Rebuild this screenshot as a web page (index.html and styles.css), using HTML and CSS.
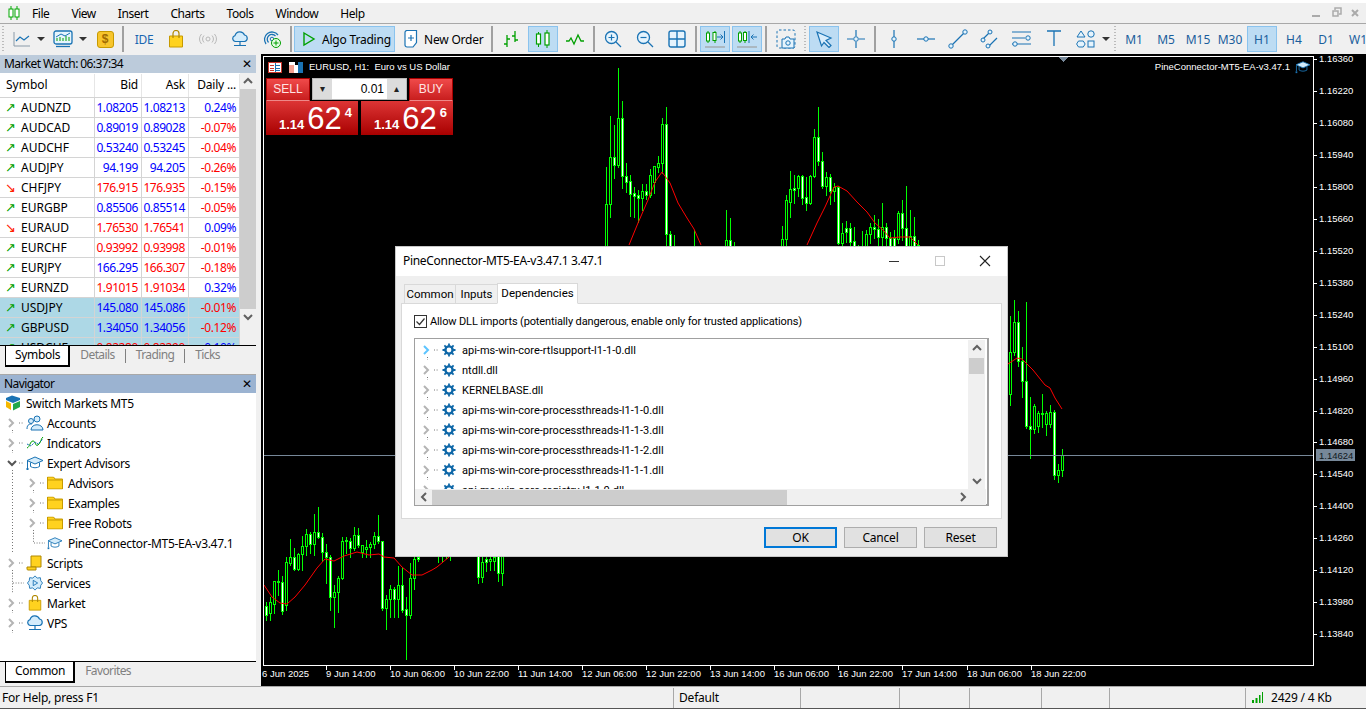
FILE: index.html
```html
<!DOCTYPE html>
<html lang="en">
<head>
<meta charset="utf-8">
<title>MetaTrader 5</title>
<link rel="stylesheet" href="styles.css">
</head>
<body>
<svg class="defs" aria-hidden="true">
  <symbol id="tw-r" viewBox="0 0 26 20"><path d="M9 6l4 4-4 4" fill="none" stroke="#b4b4b4" stroke-width="2"/><path d="M12.5 17v3M19 10h5" stroke="#777" stroke-dasharray="1 1.6" fill="none"/></symbol>
  <symbol id="tw-b" viewBox="0 0 26 20"><path d="M9 6l4 4-4 4" fill="none" stroke="#5cc4ff" stroke-width="2"/><path d="M12.5 17v3M19 10h5" stroke="#777" stroke-dasharray="1 1.6" fill="none"/></symbol>
  <symbol id="tw-d" viewBox="0 0 26 20"><path d="M8 8l4 4 4-4" fill="none" stroke="#555" stroke-width="2"/><path d="M12.5 17v3M19 10h5" stroke="#777" stroke-dasharray="1 1.6" fill="none"/></symbol>
  <symbol id="tw-t" viewBox="0 0 26 20"><path d="M12.5 0v20M13 10h11" stroke="#777" stroke-dasharray="1 1.6" fill="none"/></symbol>
  <symbol id="tw-l" viewBox="0 0 26 20"><path d="M12.5 0v10M13 10h11" stroke="#777" stroke-dasharray="1 1.6" fill="none"/></symbol>
  <symbol id="gear" viewBox="0 0 14 14"><circle cx="7" cy="7" r="3.6" fill="none" stroke="#0f68a8" stroke-width="2.4"/><path d="M7 .5v2.6M7 10.900v2.600M.5 7h2.600M10.900 7h2.600M2.400 2.400l1.900 1.900M9.700 9.700l1.900 1.900M2.400 11.600l1.900-1.900M9.700 4.300l1.900-1.900" stroke="#0f68a8" stroke-width="1.800"/></symbol>
  <symbol id="folder" viewBox="0 0 16 13"><path d="M.5 12.500V.5h6l1.500 2h7.500v10z" fill="#ffd21f" stroke="#c79a00"/><path d="M.5 3.500h15" stroke="#c79a00"/></symbol>
  <symbol id="cap" viewBox="0 0 18 16"><path d="M1 5.500L9 2l8 3.500L9 9z" fill="#d4ecfb" stroke="#1a73b4"/><path d="M4.500 7.500v4c2.500 1.700 6.500 1.700 9 0v-4" fill="none" stroke="#1a73b4"/><path d="M1.500 6v7" stroke="#1a73b4"/><rect x="0.500" y="13" width="2" height="2" fill="#1a73b4"/></symbol>
  <symbol id="bag" viewBox="0 0 16 18"><path d="M1.500 6h13v11h-13z" fill="#ffd21f" stroke="#c79a00"/><path d="M5 8V3.500a3 3 0 0 1 6 0V8" fill="none" stroke="#b08800" stroke-width="1.200"/></symbol>
  <symbol id="cloud" viewBox="0 0 18 16"><path d="M4.500 10.500a3 3 0 0 1-.5-5.900 5 5 0 0 1 9.500-.6 3.300 3.300 0 0 1 0 6.500z" fill="#d4ecfb" stroke="#1a73b4" stroke-width="1.200"/><path d="M9 10.500v3.500M3 14.500h12" stroke="#1a73b4" stroke-width="1.200"/></symbol>
</svg>

<div class="app">
  <header class="menubar">
    <svg class="logo" viewBox="0 0 12 14"><path d="M3 0v14M9 0v14" stroke="#00a800"/><rect x="1" y="3" width="4" height="8" fill="#fff" stroke="#00a800"/><rect x="7" y="3" width="4" height="8" fill="#fff" stroke="#00a800"/></svg>
    <nav class="menu"><span>File</span><span>View</span><span>Insert</span><span>Charts</span><span>Tools</span><span>Window</span><span>Help</span></nav>
    <div class="winctl">
      <svg viewBox="0 0 50 12" class="winctl-ic"><path d="M1 9h8" stroke="#aaa" stroke-width="2"/><path d="M22 4h5v5h-5zM24 3V1h6v6h-2" fill="none" stroke="#aaa" stroke-width="1.500"/><path d="M41 3l6 6M47 3l-6 6" stroke="#aaa" stroke-width="2"/></svg>
    </div>
  </header>

  <div class="toolbar">
    <i class="grip"></i>
    <div class="tb dd dd-a"><svg viewBox="0 0 18 16" class="ic18"><path d="M1 1v14h16" fill="none" stroke="#8a9aa8"/><path d="M3 10l4-4 4 3 5-4" fill="none" stroke="#1a73b4" stroke-width="1.200"/></svg><b class="arrow"></b></div>
    <div class="tb dd dd-b"><svg viewBox="0 0 20 18" class="ic20"><rect x="1" y="1" width="18" height="13" rx="2" fill="#e6f4fd" stroke="#1a73b4" stroke-width="1.300"/><path d="M4 11V8M7 11V7M10 11V8M13 11V6M16 11V7" stroke="#00a000"/><path d="M3 7l5-3 4 2 5-3" fill="none" stroke="#1a73b4"/><path d="M3 16.500h14" stroke="#1a73b4" stroke-width="1.300"/></svg><b class="arrow"></b></div>
    <div class="tb"><span class="dollar">$</span></div>
    <i class="sep sep-wide"></i>
    <div class="tb"><span class="ide">IDE</span></div>
    <div class="tb"><svg viewBox="0 0 16 18" class="ic18"><use href="#bag"/></svg></div>
    <div class="tb"><svg viewBox="0 0 18 12" class="ic18"><circle cx="9" cy="6" r="2" fill="none" stroke="#b8b8b8"/><path d="M5 2.500a5 5 0 0 0 0 7M13 2.500a5 5 0 0 1 0 7M2.500 1a8 8 0 0 0 0 10M15.500 1a8 8 0 0 1 0 10" fill="none" stroke="#b8b8b8"/></svg></div>
    <div class="tb"><svg viewBox="0 0 18 16" class="ic18"><use href="#cloud"/></svg></div>
    <div class="tb"><svg viewBox="0 0 18 18" class="ic18"><path d="M3 14A7.500 7.500 0 1 1 15 5M5.500 12.500A4.500 4.500 0 1 1 12.500 6" fill="none" stroke="#1a73b4" stroke-width="1.300"/><circle cx="9" cy="9" r="1.800" fill="none" stroke="#1a73b4"/><circle cx="13" cy="13" r="4.500" fill="#e8fbe8" stroke="#00a000"/><path d="M13 10.500v5M10.500 13h5" stroke="#00a000"/></svg></div>
    <i class="sep"></i>
    <div class="tbtext algo active"><svg viewBox="0 0 14 16" class="ic-play"><path d="M2 2l10 6-10 6z" fill="none" stroke="#00a000" stroke-width="1.400"/></svg><span>Algo Trading</span></div>
    <div class="tbtext order"><svg viewBox="0 0 15 18" class="ic-doc"><path d="M1 2.500a2 2 0 0 1 2-2h9.500v12L9 17H3a2 2 0 0 1-2-2z" fill="#fff" stroke="#1a73b4" stroke-width="1.200"/><path d="M7 5v6M4 8h6" stroke="#1a73b4" stroke-width="1.200"/></svg><span>New Order</span></div>
    <i class="sep"></i>
    <div class="tb"><svg viewBox="0 0 18 18" class="ic18"><path d="M5 5v12M2 14h3M5 9h3M13 1v11M13 6h-3M13 10h3" fill="none" stroke="#00a000" stroke-width="1.300"/></svg></div>
    <div class="tb active"><svg viewBox="0 0 16 18" class="ic18"><path d="M3.500 2v15M12 0v18" stroke="#00a000"/><rect x="1.500" y="4" width="4" height="10" fill="#fff" stroke="#00a000" stroke-width="1.200"/><rect x="10" y="3" width="4" height="12" fill="#fff" stroke="#00a000" stroke-width="1.200"/></svg></div>
    <div class="tb"><svg viewBox="0 0 18 12" class="ic18"><path d="M0 8h3l2-3 3 6 4-9 3 6h3" fill="none" stroke="#00a000" stroke-width="1.300"/></svg></div>
    <i class="sep"></i>
    <div class="tb"><svg viewBox="0 0 18 18" class="ic18"><circle cx="7.500" cy="7.500" r="6" fill="#e6f4fd" stroke="#1a73b4" stroke-width="1.300"/><path d="M12 12l5 5" stroke="#1a73b4" stroke-width="1.300"/><path d="M7.500 4.500v6M4.500 7.500h6" stroke="#1a73b4" stroke-width="1.200"/></svg></div>
    <div class="tb"><svg viewBox="0 0 18 18" class="ic18"><circle cx="7.500" cy="7.500" r="6" fill="#e6f4fd" stroke="#1a73b4" stroke-width="1.300"/><path d="M12 12l5 5" stroke="#1a73b4" stroke-width="1.300"/><path d="M4.500 7.500h6" stroke="#1a73b4" stroke-width="1.200"/></svg></div>
    <div class="tb"><svg viewBox="0 0 18 18" class="ic18"><rect x="1" y="1" width="16" height="16" rx="2" fill="#e6f4fd" stroke="#1a73b4" stroke-width="1.400"/><path d="M9 1v16M1 9h16" stroke="#1a73b4" stroke-width="1.400"/></svg></div>
    <i class="sep"></i>
    <div class="tb active"><svg viewBox="0 0 20 18" class="ic20"><path d="M3 1v12M10 1v12" stroke="#00a000"/><rect x="1.500" y="3" width="3" height="8" fill="#fff" stroke="#00a000"/><rect x="8" y="2.500" width="3" height="8" fill="#fff" stroke="#00a000"/><path d="M12 7h6M15.500 4.500L18 7l-2.500 2.500" fill="none" stroke="#1a73b4"/><path d="M19.500 1v12" stroke="#1a73b4"/><path d="M0 17h20" stroke="#a0a0a0" stroke-width="1.200"/></svg></div>
    <div class="tb active"><svg viewBox="0 0 20 18" class="ic20"><path d="M3 1v12M8 1v12" stroke="#00a000"/><rect x="1.500" y="3" width="3" height="8" fill="#fff" stroke="#00a000"/><rect x="6.500" y="2.500" width="3" height="8" fill="#fff" stroke="#00a000"/><path d="M12 1v12" stroke="#1a73b4"/><path d="M14 7h6M16.500 4.500L14 7l2.500 2.500" fill="none" stroke="#1a73b4"/><path d="M0 17h20" stroke="#a0a0a0" stroke-width="1.200"/></svg></div>
    <i class="sep sep-r"></i>
    <div class="tb"><svg viewBox="0 0 20 20" class="ic20"><rect x="1" y="1" width="18" height="18" rx="2" fill="none" stroke="#1a73b4" stroke-dasharray="2.500 2"/><path d="M6 10h3l1-2h3l1 2h4v9H6z" fill="#e6f4fd" stroke="#1a73b4"/><circle cx="12" cy="14" r="2.200" fill="none" stroke="#1a73b4"/></svg></div>
    <i class="grip grip-m"></i>
    <div class="tb active"><svg viewBox="0 0 18 18" class="ic18"><path d="M2 2l14 6-5 2.500 5 5-2 2-5-5L6.500 16z" fill="#d9edfb" stroke="#1a73b4" stroke-width="1.200"/></svg></div>
    <div class="tb"><svg viewBox="0 0 18 18" class="ic18"><path d="M9 0v6M9 12v6M0 9h6M12 9h6" stroke="#1a73b4" stroke-width="1.200"/><circle cx="9" cy="9" r="2.300" fill="#e6f4fd" stroke="#1a73b4"/></svg></div>
    <i class="sep"></i>
    <div class="tb"><svg viewBox="0 0 18 18" class="ic18"><path d="M9 0v18" stroke="#1a73b4" stroke-width="1.200"/><circle cx="9" cy="9" r="2.200" fill="#e6f4fd" stroke="#1a73b4"/></svg></div>
    <div class="tb"><svg viewBox="0 0 18 18" class="ic18"><path d="M0 9h18" stroke="#1a73b4" stroke-width="1.200"/><circle cx="9" cy="9" r="2.200" fill="#e6f4fd" stroke="#1a73b4"/></svg></div>
    <div class="tb"><svg viewBox="0 0 20 20" class="ic20"><path d="M3 17L17 3" stroke="#1a73b4" stroke-width="1.200"/><circle cx="3" cy="17" r="2.200" fill="#e6f4fd" stroke="#1a73b4"/><circle cx="17" cy="3" r="2.200" fill="#e6f4fd" stroke="#1a73b4"/></svg></div>
    <div class="tb"><svg viewBox="0 0 20 20" class="ic20"><path d="M2 11l8-8M8 18l9-9" stroke="#1a73b4" stroke-width="1.200"/><circle cx="3" cy="11" r="2" fill="#e6f4fd" stroke="#1a73b4"/><circle cx="10" cy="3" r="2" fill="#e6f4fd" stroke="#1a73b4"/><circle cx="8" cy="17" r="2" fill="#e6f4fd" stroke="#1a73b4"/></svg></div>
    <div class="tb"><svg viewBox="0 0 20 18" class="ic20"><path d="M0 2h19M0 8h13M0 14h19" stroke="#1a73b4" stroke-width="1.200"/><circle cx="16" cy="8" r="2.200" fill="#e6f4fd" stroke="#1a73b4"/><circle cx="3" cy="14" r="2.200" fill="#e6f4fd" stroke="#1a73b4"/></svg></div>
    <div class="tb"><svg viewBox="0 0 16 18" class="ic18"><path d="M1 1h14M8 1v15" stroke="#1a73b4" stroke-width="1.300"/></svg></div>
    <div class="tb dd dd-c"><svg viewBox="0 0 20 18" class="ic20"><path d="M5 1l4 6H1z" fill="#e6f4fd" stroke="#1a73b4"/><circle cx="15" cy="4" r="3.200" fill="#e6f4fd" stroke="#1a73b4"/><path d="M2 11h5l2 3-2 3H2l-2-3z" fill="#e6f4fd" stroke="#1a73b4" transform="translate(.6 0) scale(.95 1)"/><rect x="12" y="11" width="6" height="6" fill="#e6f4fd" stroke="#1a73b4"/></svg><b class="arrow"></b></div>
    <i class="grip grip-m"></i>
    <div class="tb tf">M1</div><div class="tb tf">M5</div><div class="tb tf">M15</div><div class="tb tf">M30</div><div class="tb tf active">H1</div><div class="tb tf">H4</div><div class="tb tf">D1</div><div class="tb tf">W1</div>
  </div>

  <div class="main">
    <aside class="left">
      <div class="panelhead mw-head"><span class="ph-t">Market Watch: 06:37:34</span><span class="x">✕</span></div>
      <div class="mw">
        <div class="mw-table">
          <div class="mw-row mw-top"><span class="c-s">Symbol</span><span>Bid</span><span>Ask</span><span>Daily ...</span></div>
          <div class="mw-row"><span class="c-s"><i class="ar up">↗</i>AUDNZD</span><span class="b">1.08205</span><span class="b">1.08213</span><span class="b">0.24%</span></div>
          <div class="mw-row"><span class="c-s"><i class="ar up">↗</i>AUDCAD</span><span class="b">0.89019</span><span class="b">0.89028</span><span class="r">-0.07%</span></div>
          <div class="mw-row"><span class="c-s"><i class="ar up">↗</i>AUDCHF</span><span class="b">0.53240</span><span class="b">0.53245</span><span class="r">-0.04%</span></div>
          <div class="mw-row"><span class="c-s"><i class="ar up">↗</i>AUDJPY</span><span class="b">94.199</span><span class="b">94.205</span><span class="r">-0.26%</span></div>
          <div class="mw-row"><span class="c-s"><i class="ar dn">↘</i>CHFJPY</span><span class="r">176.915</span><span class="r">176.935</span><span class="r">-0.15%</span></div>
          <div class="mw-row"><span class="c-s"><i class="ar up">↗</i>EURGBP</span><span class="b">0.85506</span><span class="b">0.85514</span><span class="r">-0.05%</span></div>
          <div class="mw-row"><span class="c-s"><i class="ar dn">↘</i>EURAUD</span><span class="r">1.76530</span><span class="r">1.76541</span><span class="b">0.09%</span></div>
          <div class="mw-row"><span class="c-s"><i class="ar up">↗</i>EURCHF</span><span class="r">0.93992</span><span class="r">0.93998</span><span class="r">-0.01%</span></div>
          <div class="mw-row"><span class="c-s"><i class="ar up">↗</i>EURJPY</span><span class="b">166.295</span><span class="r">166.307</span><span class="r">-0.18%</span></div>
          <div class="mw-row"><span class="c-s"><i class="ar up">↗</i>EURNZD</span><span class="r">1.91015</span><span class="r">1.91034</span><span class="b">0.32%</span></div>
          <div class="mw-row sel"><span class="c-s"><i class="ar up">↗</i>USDJPY</span><span class="b">145.080</span><span class="b">145.086</span><span class="r">-0.01%</span></div>
          <div class="mw-row sel"><span class="c-s"><i class="ar up">↗</i>GBPUSD</span><span class="b">1.34050</span><span class="b">1.34056</span><span class="r">-0.12%</span></div>
          <div class="mw-row sel"><span class="c-s"><i class="ar up">↗</i>USDCHF</span><span class="r">0.82280</span><span class="r">0.82290</span><span class="b">0.10%</span></div>
        </div>
        <div class="mw-scroll">
          <svg viewBox="0 0 16 16" class="sb-a"><path d="M4 10l4-4 4 4" fill="none" stroke="#606060" stroke-width="2"/></svg>
          <div class="sb-thumb"></div>
          <svg viewBox="0 0 16 16" class="sb-a"><path d="M4 6l4 4 4-4" fill="none" stroke="#606060" stroke-width="2"/></svg>
        </div>
      </div>
      <div class="tabs tabs-mw">
        <span class="tab on">Symbols</span><span class="tab">Details</span><i></i><span class="tab">Trading</span><i></i><span class="tab">Ticks</span>
      </div>
      <div class="panelhead nav-head"><span class="ph-t">Navigator</span><span class="x">✕</span></div>
      <div class="tree">
        <div class="nrow root"><svg viewBox="0 0 16 16" class="rootic"><path d="M1 3l6-2.500L15 3v2L8 8 1 5z" fill="#1a73b4"/><path d="M1 6l5 2.500V15L1 12z" fill="#f5b800"/><path d="M15 6L8 9v6.500L15 12z" fill="#22a84a"/></svg><span>Switch Markets MT5</span></div>
        <div class="nrow"><svg class="tw"><use href="#tw-r"/></svg><svg viewBox="0 0 18 16" class="nic"><circle cx="11" cy="4" r="3" fill="#d4ecfb" stroke="#1a73b4"/><path d="M5 15c0-7 12-7 12 0z" fill="#d4ecfb" stroke="#1a73b4"/><circle cx="5" cy="6" r="2.500" fill="#d4ecfb" stroke="#1a73b4"/><path d="M1 14c0-5 3-5 5-5" fill="none" stroke="#1a73b4"/></svg><span>Accounts</span></div>
        <div class="nrow"><svg class="tw"><use href="#tw-r"/></svg><svg viewBox="0 0 18 16" class="nic"><path d="M1 13c3-1 3-7 6-7s2 6 5 4 3-7 5-8" fill="none" stroke="#00a000"/><path d="M1 9l4 2 4-4 3 2 5-5" fill="none" stroke="#1a73b4" stroke-dasharray="2 1"/></svg><span>Indicators</span></div>
        <div class="nrow"><svg class="tw"><use href="#tw-d"/></svg><svg viewBox="0 0 18 16" class="nic"><use href="#cap"/></svg><span>Expert Advisors</span></div>
        <div class="nrow lv2"><i class="guide"></i><svg class="tw"><use href="#tw-r"/></svg><svg viewBox="0 0 16 13" class="nic2"><use href="#folder"/></svg><span>Advisors</span></div>
        <div class="nrow lv2"><i class="guide"></i><svg class="tw"><use href="#tw-r"/></svg><svg viewBox="0 0 16 13" class="nic2"><use href="#folder"/></svg><span>Examples</span></div>
        <div class="nrow lv2"><i class="guide"></i><svg class="tw"><use href="#tw-r"/></svg><svg viewBox="0 0 16 13" class="nic2"><use href="#folder"/></svg><span>Free Robots</span></div>
        <div class="nrow lv2"><i class="guide"></i><svg class="tw"><use href="#tw-l"/></svg><svg viewBox="0 0 18 16" class="nic2"><use href="#cap"/></svg><span>PineConnector-MT5-EA-v3.47.1</span></div>
        <div class="nrow"><svg class="tw"><use href="#tw-r"/></svg><svg viewBox="0 0 18 16" class="nic"><path d="M5 1h10v11H5z" fill="#ffd21f" stroke="#b08800"/><path d="M1 12h9v3H2a1 1 0 0 1-1-1z" fill="#ffd21f" stroke="#b08800"/></svg><span>Scripts</span></div>
        <div class="nrow"><svg class="tw"><use href="#tw-t"/></svg><svg viewBox="0 0 18 18" class="nic"><path d="M9 1l2.500 2.500 3.500-.5.500 3.500L17.500 9l-2 2.500-.5 3.500-3.500-.5L9 17l-2.500-2.500L3 15l-.5-3.500L.5 9l2-2.500L3 3l3.500.5z" fill="#d4ecfb" stroke="#1a73b4"/><path d="M7 6l5 3-5 3z" fill="none" stroke="#1a73b4"/></svg><span>Services</span></div>
        <div class="nrow"><svg class="tw"><use href="#tw-r"/></svg><svg viewBox="0 0 16 18" class="nic"><use href="#bag"/></svg><span>Market</span></div>
        <div class="nrow"><svg class="tw"><use href="#tw-r"/></svg><svg viewBox="0 0 18 16" class="nic"><use href="#cloud"/></svg><span>VPS</span></div>
      </div>
      <div class="tabs tabs-nav">
        <span class="tab on">Common</span><span class="tab">Favorites</span>
      </div>
    </aside>

    <section class="chart">
      <svg class="chart-svg" viewBox="261 54 1105 632" width="1105" height="632">
        <g id="candles" shape-rendering="crispEdges"></g>
        <g fill="none" stroke="#ff0000">
          <polyline points="264,585 272,597 280,603 287,604 295,597 305,585 317,568 325,559 334,561 344,556 357,552 369,555 379,554 384,557 394,558 402,567 412,575 422,575 432,570 437,567 449,557"/>
          <polyline points="629,245 638,223 648,200 655,182 662,172 670,183 678,203 687,218 694,229 701,245"/>
          <polyline points="807,245 817,223 825,207 834,187 838,186 847,191 857,202 867,212 875,223 883,230 890,238 900,237 910,237 918,245"/>
          <polyline points="1008,364 1017,358 1022,359 1033,370 1045,385 1050,388 1055,398 1062,409"/>
        </g>
        <g shape-rendering="crispEdges">
          <path d="M264 455.500H1313" stroke="#778899"/>
          <rect x="263.500" y="56.500" width="1050" height="609" fill="none" stroke="#fff"/>
          <path d="M1314 59.500h3M1314 91.500h3M1314 123.500h3M1314 155.500h3M1314 187.500h3M1314 219.500h3M1314 251.500h3M1314 283.500h3M1314 315.500h3M1314 347.500h3M1314 379.500h3M1314 411.500h3M1314 442.500h3M1314 474.500h3M1314 506.500h3M1314 538.500h3M1314 570.500h3M1314 602.500h3M1314 634.500h3" stroke="#fff"/>
          <path d="M326.500 666v4M390.500 666v4M454.500 666v4M518.500 666v4M582.500 666v4M646.500 666v4M710.500 666v4M774.500 666v4M838.500 666v4M902.500 666v4M967.500 666v4M1031.500 666v4" stroke="#fff"/>
          <path d="M1058 57h11l-5.500 5z" fill="#778899"/>
          <rect x="1316" y="449" width="39" height="12" fill="#778899"/>
        </g>
        <g class="axis" transform="translate(0 -1)">
          <text x="1319" y="63">1.16360</text><text x="1319" y="95">1.16220</text><text x="1319" y="127">1.16080</text><text x="1319" y="159">1.15940</text><text x="1319" y="191">1.15800</text><text x="1319" y="223">1.15660</text><text x="1319" y="255">1.15520</text><text x="1319" y="287">1.15380</text><text x="1319" y="319">1.15240</text><text x="1319" y="351">1.15100</text><text x="1319" y="383">1.14960</text><text x="1319" y="415">1.14820</text><text x="1319" y="446">1.14680</text><text x="1319" y="478">1.14540</text><text x="1319" y="510">1.14400</text><text x="1319" y="542">1.14260</text><text x="1319" y="574">1.14120</text><text x="1319" y="606">1.13980</text><text x="1319" y="638">1.13840</text>
          <text x="1319" y="460" class="bidtxt">1.14624</text>
          <text x="262" y="678">6 Jun 2025</text><text x="326" y="678">9 Jun 14:00</text><text x="390" y="678">10 Jun 06:00</text><text x="454" y="678">10 Jun 22:00</text><text x="518" y="678">11 Jun 14:00</text><text x="582" y="678">12 Jun 06:00</text><text x="646" y="678">12 Jun 22:00</text><text x="710" y="678">13 Jun 14:00</text><text x="774" y="678">16 Jun 06:00</text><text x="838" y="678">16 Jun 22:00</text><text x="902" y="678">17 Jun 14:00</text><text x="967" y="678">18 Jun 06:00</text><text x="1031" y="678">18 Jun 22:00</text>
          <text x="309" y="71">EURUSD, H1:  Euro vs US Dollar</text>
          <text x="1290" y="71" class="endtxt">PineConnector-MT5-EA-v3.47.1</text>
        </g>
        <g shape-rendering="crispEdges">
          <rect x="268.500" y="62.500" width="13" height="10" fill="#fff" stroke="#c8352b"/><path d="M275 63v9" stroke="#1a73b4"/><path d="M270 65.500h4M270 68.500h4M270 70.500h4" stroke="#c8352b"/><path d="M276 65.500h4M276 68.500h4M276 70.500h4" stroke="#1a73b4"/>
          <path d="M289 62h6v3h3v-3h5v11h-14z" fill="#fff"/><rect x="289" y="65" width="5" height="8" fill="#f4a090"/><rect x="298" y="62" width="5" height="11" fill="#1a73b4"/>
        </g>
        <use href="#cap" x="1295" y="60" width="16" height="14"/>
      </svg>

      <div class="oneclick">
        <div class="oc-top">
          <div class="oc-btn">SELL</div>
          <div class="oc-lot"><span class="oc-st">▾</span><span class="oc-val">0.01</span><span class="oc-st">▴</span></div>
          <div class="oc-btn">BUY</div>
        </div>
        <div class="oc-prices">
          <div class="oc-price"><span class="p-a">1.14</span><span class="p-b">62</span><span class="p-c">4</span></div>
          <div class="oc-price"><span class="p-a">1.14</span><span class="p-b">62</span><span class="p-c">6</span></div>
        </div>
      </div>
    </section>
  </div>

  <footer class="status">
    <span class="st st-help">For Help, press F1</span>
    <span class="st st-def">Default</span>
    <span class="st st-a"></span><span class="st st-b"></span><span class="st st-c"></span><span class="st st-d"></span><span class="st st-e"></span>
    <span class="st st-net"><svg viewBox="0 0 12 11" class="sig"><path d="M1 8v3h2V8zM4.500 6v5h2V6zM8 3v8h1.500V3zM11 0v11h1V0z" fill="#00a000"/></svg>2429 / 4 Kb</span>
  </footer>

  <div class="dialog">
    <div class="dlg-title">
      <span class="dlg-name">PineConnector-MT5-EA-v3.47.1 3.47.1</span>
      <svg viewBox="0 0 110 12" class="dlg-ctl"><path d="M0 6.500h10" stroke="#333"/><rect x="46.500" y="1.500" width="9" height="9" fill="none" stroke="#c8c8c8"/><path d="M91 1l10 10M101 1L91 11" stroke="#222" stroke-width="1.100"/></svg>
    </div>
    <div class="dlg-body">
      <div class="dlg-tabs">
        <span class="dtab">Common</span><span class="dtab">Inputs</span><span class="dtab on">Dependencies</span>
      </div>
      <div class="dlg-panel">
        <label class="chk"><svg viewBox="0 0 13 13" class="chkbox"><rect x=".5" y=".5" width="12" height="12" fill="#fff" stroke="#333"/><path d="M2.500 6.500l3 3 5-6" fill="none" stroke="#333" stroke-width="1.200"/></svg><span>Allow DLL imports (potentially dangerous, enable only for trusted applications)</span></label>
        <div class="dep">
          <div class="dep-main">
            <div class="dep-list">
              <div class="drow"><svg class="tw"><use href="#tw-b"/></svg><svg class="gear"><use href="#gear"/></svg><span>api-ms-win-core-rtlsupport-l1-1-0.dll</span></div>
              <div class="drow"><svg class="tw"><use href="#tw-r"/></svg><svg class="gear"><use href="#gear"/></svg><span>ntdll.dll</span></div>
              <div class="drow"><svg class="tw"><use href="#tw-r"/></svg><svg class="gear"><use href="#gear"/></svg><span>KERNELBASE.dll</span></div>
              <div class="drow"><svg class="tw"><use href="#tw-r"/></svg><svg class="gear"><use href="#gear"/></svg><span>api-ms-win-core-processthreads-l1-1-0.dll</span></div>
              <div class="drow"><svg class="tw"><use href="#tw-r"/></svg><svg class="gear"><use href="#gear"/></svg><span>api-ms-win-core-processthreads-l1-1-3.dll</span></div>
              <div class="drow"><svg class="tw"><use href="#tw-r"/></svg><svg class="gear"><use href="#gear"/></svg><span>api-ms-win-core-processthreads-l1-1-2.dll</span></div>
              <div class="drow"><svg class="tw"><use href="#tw-r"/></svg><svg class="gear"><use href="#gear"/></svg><span>api-ms-win-core-processthreads-l1-1-1.dll</span></div>
              <div class="drow"><svg class="tw"><use href="#tw-r"/></svg><svg class="gear"><use href="#gear"/></svg><span>api-ms-win-core-registry-l1-1-0.dll</span></div>
            </div>
            <div class="dep-v">
              <svg viewBox="0 0 16 16" class="sb-a"><path d="M4 10l4-4 4 4" fill="none" stroke="#606060" stroke-width="2"/></svg>
              <div class="dep-vthumb"></div>
              <svg viewBox="0 0 16 16" class="sb-a"><path d="M4 6l4 4 4-4" fill="none" stroke="#606060" stroke-width="2"/></svg>
            </div>
          </div>
          <div class="dep-h">
            <svg viewBox="0 0 16 16" class="sb-a"><path d="M10 4L6 8l4 4" fill="none" stroke="#606060" stroke-width="2"/></svg>
            <div class="dep-htrack"><div class="dep-hthumb"></div></div>
            <svg viewBox="0 0 16 16" class="sb-a"><path d="M6 4l4 4-4 4" fill="none" stroke="#606060" stroke-width="2"/></svg>
          </div>
        </div>
      </div>
      <div class="dlg-btns">
        <span class="btn ok">OK</span><span class="btn">Cancel</span><span class="btn">Reset</span>
      </div>
    </div>
  </div>
</div>
<script src="script.js"></script>
</body>
</html>
```

FILE: styles.css
```css
* { box-sizing: border-box; }
html, body { margin: 0; padding: 0; background: #f0f0f0; }
body { font: 12px "Noto Sans", "Open Sans", sans-serif; color: #000; }
.defs { position: absolute; width: 0; height: 0; }
.app { position: relative; width: 1366px; height: 709px; overflow: hidden; display: flex; flex-direction: column; background: #f0f0f0; }

/* menu */
.menubar { height: 24px; flex: none; border-top: 3px solid #fff; border-bottom: 1px solid #a8a8a8; display: flex; align-items: center; padding-left: 8px; }
.logo { width: 12px; height: 14px; }
.menu { display: flex; gap: 22px; margin-left: 12px; letter-spacing: -.45px; }
.winctl { margin-left: auto; margin-right: 5px; }
.winctl-ic { display: block; width: 50px; height: 12px; }

/* toolbar */
.toolbar { height: 30px; flex: none; display: flex; align-items: center; padding-left: 2px; }
.grip { width: 2px; height: 26px; margin-right: 2px; background: repeating-linear-gradient(#bbb 0 1px, transparent 1px 3px); flex: none; }
.grip-m { margin: 0 2px; }
.tb { width: 30px; height: 26px; margin: 0 1px; flex: none; display: flex; align-items: center; justify-content: center; border: 1px solid transparent; }
.active { background: #bddcf3; border: 1px solid #8ac3ee; }
.dd { justify-content: flex-start; margin: 0; border: 0; }
.dd-a { width: 39px; padding-left: 7px; }
.dd-b { width: 44px; padding-left: 8px; }
.dd-c { width: 42px; padding-left: 6px; }
.arrow { width: 0; height: 0; border-left: 4px solid transparent; border-right: 4px solid transparent; border-top: 4px solid #333; margin-left: 6px; }
.sep { width: 2px; height: 26px; margin: 0 2px; background: #a0a0a0; flex: none; }
.sep-wide { margin-left: 1px; margin-right: 4px; }
.sep-r { margin-right: 3px; }
.ic18 { width: 18px; height: 18px; display: block; }
.ic20 { width: 20px; height: 20px; display: block; }
.dollar { width: 17px; height: 17px; background: #f7c52c; border: 1px solid #c79a00; border-radius: 3px; color: #a06a00; font: bold 12px "Liberation Sans", sans-serif; text-align: center; line-height: 15px; }
.ide { color: #1a66b0; font-size: 12px; letter-spacing: -.3px; }
.tbtext { height: 26px; display: flex; align-items: center; flex: none; white-space: nowrap; letter-spacing: -.2px; }
.algo { width: 101px; padding-left: 7px; gap: 6px; }
.order { width: 91px; margin-left: 3px; padding-left: 5px; gap: 5px; border: 1px solid transparent; }
.ic-play { width: 14px; height: 16px; flex: none; }
.ic-doc { width: 15px; height: 18px; flex: none; }
.tf { color: #1a5e9c; font-size: 12px; }

/* main */
.main { flex: 1; min-height: 0; display: flex; }
.left { width: 256px; margin-right: 5px; flex: none; display: flex; flex-direction: column; padding-top: 1px; }
.panelhead { height: 18px; flex: none; display: flex; align-items: center; justify-content: space-between; padding: 0 4px; }
.ph-t { letter-spacing: -.6px; margin-bottom: 2px; }
.mw-head { background: #bccbdb; }
.nav-head { background: #9bb3d1; margin-top: 8px; height: 19px; border-top: 1px solid #a8a8a8; }
.x { font: bold 12px "DejaVu Sans", sans-serif; }
.mw { height: 272px; flex: none; display: flex; overflow: hidden; background: #fff; }
.mw-table { width: 240px; flex: none; }
.mw-row { display: grid; grid-template-columns: 95px 47px 47px 51px; height: 20px; border-bottom: 1px solid #d4d4d4; }
.mw-row > span { text-align: right; padding-right: 3px; border-right: 1px solid #d4d4d4; line-height: 19px; white-space: nowrap; letter-spacing: -.4px; }
.mw-row > .c-s { text-align: left; padding-left: 21px; padding-right: 0; letter-spacing: 0; }
.mw-top { height: 24px; margin-top: 1px; }
.mw-top > span { line-height: 22px; border-right-color: #e6e6e6; letter-spacing: -.2px; }
.mw-top > .c-s { padding-left: 6px; }
.sel { background: #add8e6; }
.ar { font: 13px/1 "DejaVu Sans", sans-serif; margin-left: -16px; width: 16px; display: inline-block; }
.up { color: #00a000; }
.dn { color: #ff2000; }
.b { color: #0000ff; }
.r { color: #ff0000; }
.mw-scroll { flex: 1; display: flex; flex-direction: column; background: #f0f0f0; }
.sb-a { width: 16px; height: 16px; flex: none; display: block; }
.sb-thumb { height: 220px; background: #cdcdcd; }
.tabs { flex: none; display: flex; align-items: flex-start; border-top: 1px solid #000; padding-left: 5px; color: #808080; }
.tabs-mw { height: 21px; }
.tabs-mw > i { width: 1px; height: 14px; margin-top: 3px; background: #808080; }
.tab { padding: 0 10px; line-height: 18px; letter-spacing: -.6px; }
.tab.on { background: #fff; color: #000; border: 1px solid #000; border-top: 0; border-right-width: 2px; border-bottom-width: 2px; height: 21px; padding: 0 8px 0 9px; letter-spacing: -.3px; }
.tree { flex: 1; min-height: 0; background: #fff; letter-spacing: -.3px; }
.nrow { height: 20px; display: flex; align-items: center; white-space: nowrap; }
.root { padding-left: 5px; }
.rootic { width: 16px; height: 16px; margin-right: 5px; }
.tw { width: 26px; height: 20px; flex: none; }
.nic { width: 18px; height: 16px; margin-right: 3px; flex: none; }
.nic2 { width: 16px; height: 14px; margin-right: 5px; flex: none; }
.guide { width: 21px; height: 20px; flex: none; background: repeating-linear-gradient(#777 0 1px, transparent 1px 3px) 12px 0 / 1px 100% no-repeat; }
.tabs-nav { height: 25px; }

/* chart */
.chart { flex: 1; background: #000; position: relative; overflow: hidden; }
.chart-svg { display: block; }
.axis text { font: 9.500px "Liberation Sans", sans-serif; fill: #fff; white-space: pre; }
.axis .bidtxt { fill: #101820; }
.axis .endtxt { text-anchor: end; }

.oneclick { position: absolute; left: 5px; top: 24px; width: 187px; font-family: "Liberation Sans", sans-serif; }
.oc-top { display: flex; height: 23px; justify-content: space-between; }
.oc-btn { width: 44px; background: linear-gradient(#f04a4a, #c81e1e); border: 1px solid #a80000; border-bottom: 1px solid #e88; color: #ffe4e4; text-align: center; line-height: 21px; font-size: 12px; }
.oc-lot { width: 95px; height: 22px; margin-left: 2px; margin-right: 2px; display: flex; background: #fff; border: 1px solid #b8b8b8; font-size: 12px; }
.oc-st { width: 19px; background: #dcdcdc; font-size: 10px; text-align: center; line-height: 19px; color: #222; }
.oc-val { flex: 1; text-align: right; padding-right: 3px; line-height: 20px; }
.oc-prices { display: flex; justify-content: space-between; }
.oc-price { width: 92px; height: 34px; background: linear-gradient(#dd3535, #a80000); color: #fff; display: flex; align-items: flex-start; padding-left: 13px; }
.p-a { font: bold 13px/1 "Liberation Sans", sans-serif; margin-top: 17px; margin-right: 3px; }
.p-b { font-size: 31px; line-height: 1; margin-top: 2px; }
.p-c { font: bold 13px/1 "Liberation Sans", sans-serif; margin-top: 5px; margin-left: 3px; }

/* status */
.status { height: 23px; flex: none; border-top: 1px solid #a8a8a8; border-bottom: 1px solid #555; display: flex; align-items: center; letter-spacing: -.2px; }
.st { height: 20px; line-height: 20px; flex: none; border-right: 1px solid #a8a8a8; padding-left: 5px; white-space: nowrap; }
.st-help { width: 674px; padding-left: 2px; }
.st-def { width: 127px; }
.st-a { width: 99px; } .st-b { width: 70px; } .st-c { width: 72px; } .st-d { width: 68px; } .st-e { width: 136px; }
.st-net { border-right: 0; display: flex; align-items: center; gap: 8px; padding-left: 5px; }
.sig { width: 12px; height: 11px; }

/* dialog */
.dialog { position: absolute; left: 395px; top: 246px; width: 613px; height: 311px; background: #efefef; border: 1px solid #c8c8c8; display: flex; flex-direction: column; font-family: Roboto, "Noto Sans", sans-serif; font-size: 11px; }
.dlg-title { height: 29px; flex: none; background: #fff; display: flex; align-items: center; justify-content: space-between; padding: 0 8px 2px 7px; font: 12px "Noto Sans", sans-serif; letter-spacing: -.3px; }
.dlg-ctl { width: 110px; height: 12px; }
.dlg-body { flex: 1; padding: 7px 5px 0 5px; display: flex; flex-direction: column; }
.dlg-tabs { display: flex; height: 20px; align-items: flex-end; padding-left: 3px; position: relative; z-index: 1; font-size: 11.500px; }
.dtab { height: 19px; line-height: 19px; text-align: center; background: #f0f0f0; border: 1px solid #d9d9d9; border-bottom: 0; margin-right: -1px; }
.dtab:first-child { width: 52px; }
.dtab:nth-child(2) { width: 43px; }
.dtab.on { background: #fff; height: 21px; width: 81px; line-height: 18px; margin-bottom: -1px; border-bottom: 1px solid #fff; }
.dlg-panel { height: 216px; flex: none; background: #fff; border: 1px solid #d9d9d9; padding: 10px 12px 0 12px; }
.chk { display: flex; align-items: center; gap: 3px; height: 14px; letter-spacing: -.13px; }
.chkbox { width: 13px; height: 13px; flex: none; }
.dep { margin-top: 10px; height: 168px; border: 1px solid #a0a0a0; border-width: 1px 2px 2px 1px; background: #fff; display: flex; flex-direction: column; padding: 1px 1px 1px 0; }
.dep-main { height: 149px; display: flex; }
.dep-list { flex: 1; overflow: hidden; }
.drow { height: 20px; display: flex; align-items: center; white-space: nowrap; }
.gear { width: 14px; height: 14px; margin: 0 6px 0 1px; flex: none; }
.dep-v { width: 17px; flex: none; background: #f0f0f0; display: flex; flex-direction: column; align-items: center; justify-content: space-between; margin-right: 1px; }
.dep-vthumb { width: 15px; height: 16px; background: #cdcdcd; margin-bottom: auto; margin-top: 2px; }
.dep-h { height: 16px; flex: none; background: #f0f0f0; display: flex; align-items: center; padding-left: 1px; padding-right: 15px; }
.dep-htrack { flex: 1; height: 15px; }
.dep-hthumb { width: 355px; height: 15px; background: #cdcdcd; }
.dlg-btns { display: flex; justify-content: flex-end; gap: 7px; padding: 8px 5px 0 0; font: 12px "Noto Sans", sans-serif; letter-spacing: -.2px; }
.btn { width: 73px; height: 21px; line-height: 19px; text-align: center; background: #e1e1e1; border: 1px solid #adadad; }
.ok { border: 2px solid #0078d7; line-height: 17px; }
```

FILE: script.js
```js
// Candles: [x, high, bodyTop, bodyBottom, low, filled]
var C = [
[266,602,606,615,620,1],[270,597,602,613,620,0],[274,581,581,604,613,0],[278,570,581,582,595,1],[282,576,582,611,614,1],[286,557,562,605,610,0],[290,539,557,563,565,0],[294,548,557,569,570,1],[298,553,554,569,570,0],[302,536,546,554,570,0],[306,529,534,546,555,0],[310,532,534,544,553,1],[314,514,532,544,555,0],[318,507,532,537,538,1],[322,533,537,552,561,1],[326,544,552,557,583,1],[330,555,557,597,610,1],[334,585,592,597,627,0],[338,576,578,592,612,0],[342,537,541,578,579,0],[346,537,540,541,553,1],[350,538,541,548,557,1],[354,527,535,548,550,0],[358,528,535,545,547,1],[362,545,545,552,557,0],[366,540,547,549,557,0],[370,542,544,547,557,0],[374,532,536,544,548,0],[378,515,536,541,543,1],[382,541,541,608,610,1],[386,595,599,608,629,0],[390,585,589,599,617,0],[394,587,589,599,617,1],[398,566,585,599,617,0],[402,568,585,610,612,1],[406,597,609,615,659,1],[410,563,578,615,618,0],[414,556,559,578,589,0],[418,556,557,559,561,1],
[438,556,556,556,562,0],[442,556,556,556,561,0],[446,556,556,556,558,0],[450,556,556,556,560,0],
[478,556,556,577,583,1],[482,556,562,577,582,0],[486,556,559,562,571,1],[490,556,559,561,570,0],[494,556,557,561,570,0],[498,556,556,573,581,1],[502,556,556,573,585,0],
[606,167,204,260,260,0],[610,116,157,204,217,0],[614,125,157,165,178,1],[618,68,118,165,167,0],[622,101,118,176,188,1],[626,163,176,182,192,1],[630,175,181,194,216,1],[634,187,193,196,217,1],[638,190,195,198,222,1],[642,184,191,198,210,0],[646,184,191,195,199,1],[650,169,175,195,197,0],[654,166,166,182,193,0],[658,156,163,167,172,0],[662,118,124,163,173,0],[666,107,124,234,260,1],[670,231,234,260,260,1],[674,235,260,260,260,0],[694,230,260,260,260,0],
[726,210,240,260,260,0],[730,218,240,260,260,1],[734,242,250,260,260,0],
[782,226,239,260,260,0],[786,195,200,239,260,0],[790,171,189,202,217,0],[794,175,188,190,203,1],[798,175,176,188,196,0],[802,175,176,198,204,1],[806,177,197,203,210,1],[810,175,176,203,204,0],[814,129,137,176,177,0],[818,107,137,161,165,1],[822,152,161,186,188,1],[826,172,177,186,195,0],[830,174,177,191,204,1],[834,183,187,191,201,0],[838,186,187,243,244,1],[842,223,233,243,260,0],[846,221,228,232,242,1],[850,223,228,242,260,1],[854,227,241,260,260,1],[858,245,250,260,260,0],[862,231,250,260,260,0],[866,230,234,260,260,0],[870,223,227,234,243,0],[874,215,227,229,238,1],[878,219,229,237,260,1],[882,203,227,237,260,0],[886,223,227,238,260,1],[890,232,238,260,260,1],[894,230,238,260,260,1],[898,211,213,239,243,0],[902,200,213,228,240,1],[906,186,228,260,260,1],[910,210,236,260,260,0],[914,217,236,260,260,1],[918,240,245,260,260,0],
[1010,316,352,394,405,0],[1014,300,322,352,355,0],[1018,311,322,361,366,1],[1022,347,361,381,397,1],[1026,302,381,426,428,1],[1030,397,426,429,458,1],[1034,404,406,429,433,0],[1038,411,413,426,432,0],[1042,394,413,414,427,0],[1046,411,413,424,435,0],[1050,405,412,424,427,0],[1054,410,412,475,479,1],[1058,464,470,475,482,0],[1062,449,455,470,476,0]
];
var NS = "http://www.w3.org/2000/svg";
var g = document.getElementById("candles");
function rect(x, y, w, h, fill) {
  var r = document.createElementNS(NS, "rect");
  r.setAttribute("x", x); r.setAttribute("y", y);
  r.setAttribute("width", w); r.setAttribute("height", Math.max(h, 1));
  r.setAttribute("fill", fill);
  g.appendChild(r);
}
C.forEach(function (c) {
  rect(c[0], c[1], 1, c[4] - c[1] + 1, "#00ff00");
  if (c[3] > c[2]) {
    rect(c[0] - 1, c[2], 3, c[3] - c[2] + 1, "#00ff00");
    if (c[3] - c[2] >= 2) rect(c[0], c[2] + 1, 1, c[3] - c[2] - 1, c[5] ? "#ffffff" : "#000000");
  }
});
```
